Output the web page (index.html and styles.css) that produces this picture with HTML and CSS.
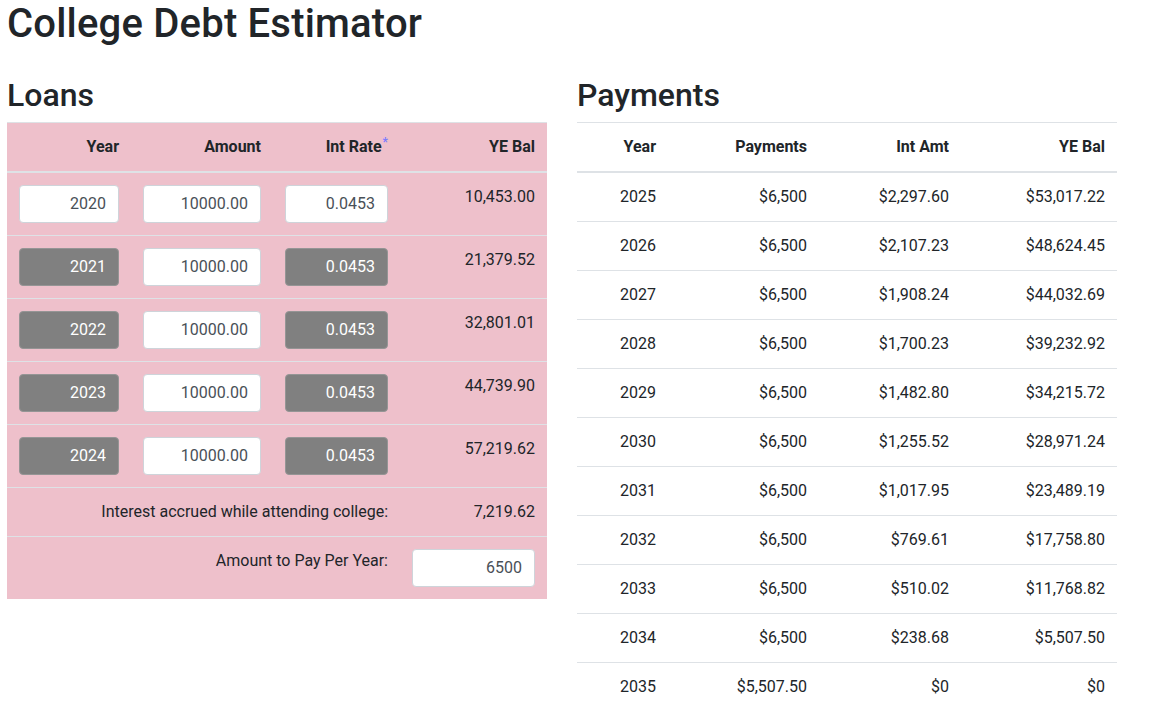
FILE: index.html
```html
<!DOCTYPE html>
<html lang="en">
<head>
<meta charset="utf-8">
<title>College Debt Estimator</title>
<link rel="stylesheet" href="styles.css">
</head>
<body>
<div class="page">
  <h1 class="title">College Debt Estimator</h1>
  <div class="columns">
    <section class="col">
      <h2 class="section-title">Loans</h2>
      <table class="table loans">
        <colgroup>
          <col class="l1"><col class="l2"><col class="l3"><col class="l4">
        </colgroup>
        <thead>
          <tr><th>Year</th><th>Amount</th><th>Int Rate<sup class="star">*</sup></th><th>YE Bal</th></tr>
        </thead>
        <tbody>
          <tr>
            <td><input class="field" type="text" value="2020"></td>
            <td><input class="field" type="text" value="10000.00"></td>
            <td><input class="field" type="text" value="0.0453"></td>
            <td>10,453.00</td>
          </tr>
          <tr>
            <td><input class="field field-ro" type="text" value="2021" readonly></td>
            <td><input class="field" type="text" value="10000.00"></td>
            <td><input class="field field-ro" type="text" value="0.0453" readonly></td>
            <td>21,379.52</td>
          </tr>
          <tr>
            <td><input class="field field-ro" type="text" value="2022" readonly></td>
            <td><input class="field" type="text" value="10000.00"></td>
            <td><input class="field field-ro" type="text" value="0.0453" readonly></td>
            <td>32,801.01</td>
          </tr>
          <tr>
            <td><input class="field field-ro" type="text" value="2023" readonly></td>
            <td><input class="field" type="text" value="10000.00"></td>
            <td><input class="field field-ro" type="text" value="0.0453" readonly></td>
            <td>44,739.90</td>
          </tr>
          <tr>
            <td><input class="field field-ro" type="text" value="2024" readonly></td>
            <td><input class="field" type="text" value="10000.00"></td>
            <td><input class="field field-ro" type="text" value="0.0453" readonly></td>
            <td>57,219.62</td>
          </tr>
          <tr>
            <td colspan="3">Interest accrued while attending college:</td>
            <td>7,219.62</td>
          </tr>
          <tr>
            <td colspan="3">Amount to Pay Per Year:</td>
            <td><input class="field" type="text" value="6500"></td>
          </tr>
        </tbody>
      </table>
    </section>
    <section class="col">
      <h2 class="section-title">Payments</h2>
      <table class="table payments">
        <colgroup>
          <col class="p1"><col class="p2"><col class="p3"><col class="p4">
        </colgroup>
        <thead>
          <tr><th>Year</th><th>Payments</th><th>Int Amt</th><th>YE Bal</th></tr>
        </thead>
        <tbody>
          <tr><td>2025</td><td>$6,500</td><td>$2,297.60</td><td>$53,017.22</td></tr>
          <tr><td>2026</td><td>$6,500</td><td>$2,107.23</td><td>$48,624.45</td></tr>
          <tr><td>2027</td><td>$6,500</td><td>$1,908.24</td><td>$44,032.69</td></tr>
          <tr><td>2028</td><td>$6,500</td><td>$1,700.23</td><td>$39,232.92</td></tr>
          <tr><td>2029</td><td>$6,500</td><td>$1,482.80</td><td>$34,215.72</td></tr>
          <tr><td>2030</td><td>$6,500</td><td>$1,255.52</td><td>$28,971.24</td></tr>
          <tr><td>2031</td><td>$6,500</td><td>$1,017.95</td><td>$23,489.19</td></tr>
          <tr><td>2032</td><td>$6,500</td><td>$769.61</td><td>$17,758.80</td></tr>
          <tr><td>2033</td><td>$6,500</td><td>$510.02</td><td>$11,768.82</td></tr>
          <tr><td>2034</td><td>$6,500</td><td>$238.68</td><td>$5,507.50</td></tr>
          <tr><td>2035</td><td>$5,507.50</td><td>$0</td><td>$0</td></tr>
        </tbody>
      </table>
    </section>
  </div>
</div>
</body>
</html>
```

FILE: styles.css
```css
html, body {
  margin: 0;
  padding: 0;
  background: #fff;
}
body {
  font-family: Roboto, "Liberation Sans", sans-serif;
  font-size: 16px;
  line-height: 1.5;
  color: #212529;
}
.page {
  padding: 0 7px;
}
.title {
  margin: 0 0 27.6px 0;
  font-size: 40px;
  font-weight: 500;
  line-height: 1.2;
  letter-spacing: 0.2px;
}
.columns {
  display: flex;
  gap: 30px;
}
.col {
  width: 540px;
}
.section-title {
  margin: 0 0 8px 0;
  font-size: 32px;
  font-weight: 500;
  line-height: 1.2;
}
.table {
  width: 540px;
  border-collapse: collapse;
  table-layout: fixed;
}
.table th,
.table td {
  padding: 12px;
  border-top: 1px solid #dee2e6;
  text-align: right;
  vertical-align: top;
}
.table thead th {
  font-weight: 700;
  vertical-align: bottom;
  border-bottom: 2px solid #dee2e6;
}
.loans {
  background: #eec0cb;
}
.l1 { width: 124px; }
.l2 { width: 142px; }
.l3 { width: 127px; }
.l4 { width: 147px; }
.p1 { width: 91px; }
.p2 { width: 151px; }
.p3 { width: 142px; }
.p4 { width: 156px; }
.star {
  font-size: 12px;
  line-height: 1;
  color: #7b7bff;
  vertical-align: top;
  position: relative;
  top: 1px;
  margin-left: 1px;
}
.field {
  display: block;
  box-sizing: border-box;
  width: 100%;
  height: 38px;
  margin: 0;
  padding: 6px 12px;
  font-family: inherit;
  font-size: 16px;
  line-height: 1.5;
  color: #495057;
  background: #fff;
  border: 1px solid #ced4da;
  border-radius: 4px;
  text-align: right;
}
.field-ro {
  background: #808080;
  border-color: #959595;
  color: #fff;
}
```
